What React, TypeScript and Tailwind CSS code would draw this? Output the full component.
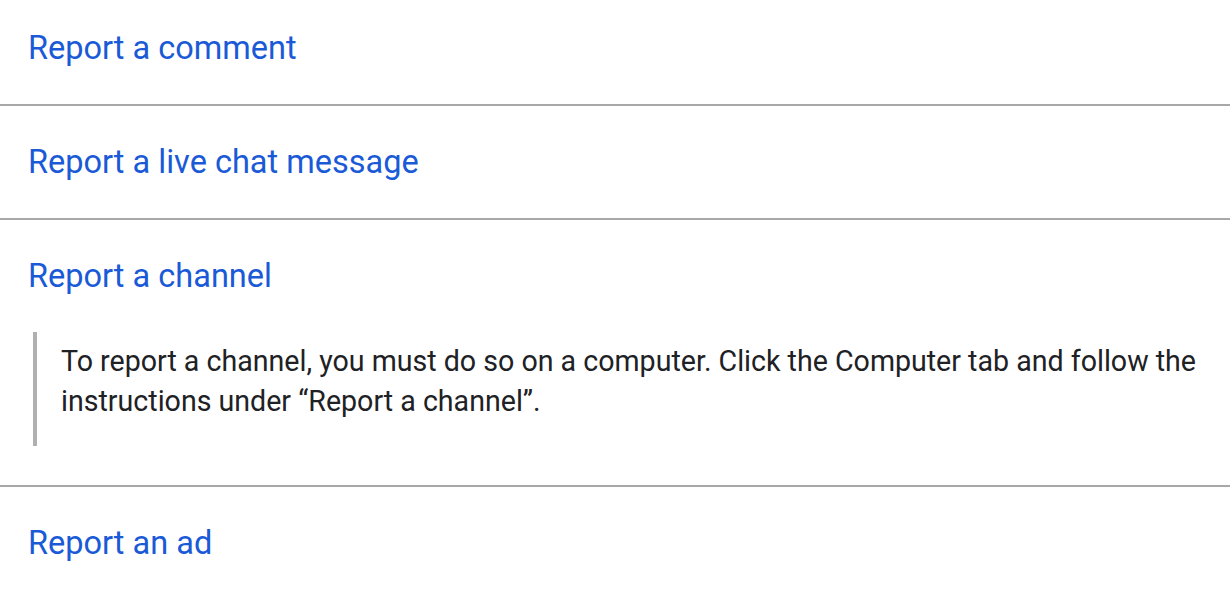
import React from "react";

const items = [
  { title: "Report a comment" },
  { title: "Report a live chat message" },
  { title: "Report a channel", open: true },
  { title: "Report an ad" },
];

export default function App() {
  return (
    <div className="w-[1230px] h-[592px] overflow-hidden bg-white" style={{ fontFamily: "Roboto, 'Noto Sans', sans-serif" }}>
      {items.map((it, i) => (
        <div key={i} className={i > 0 ? "border-t-2 border-[#a8a8a8]" : ""}>
          <div className={`${i === 0 ? "pt-[28px]" : "pt-[36px]"} pb-[36px] pl-[28px] text-[32.5px] leading-[40px] text-[#1a5ad7]`}>
            {it.title}
          </div>
          {it.open && (
            <div className="ml-[33px] mb-[39px] border-l-4 border-[#b0b0b0] pl-[24px] pt-[9px] pb-[25px] pr-[20px] text-[28.6px] leading-[40px] text-[#202124]">
              To report a channel, you must do so on a computer. Click the Computer tab and follow the instructions under “Report a channel”.
            </div>
          )}
        </div>
      ))}
    </div>
  );
}
